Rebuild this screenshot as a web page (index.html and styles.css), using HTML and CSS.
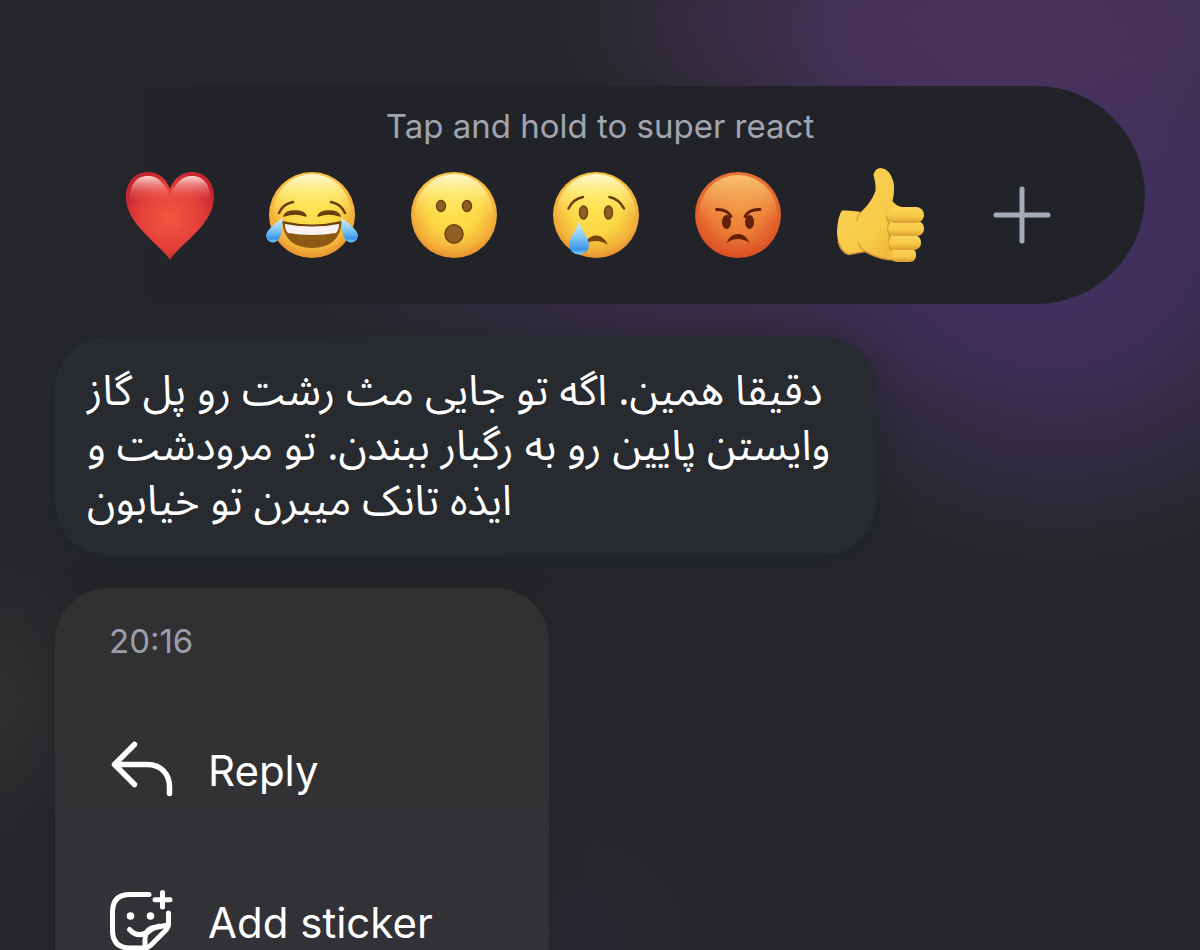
FILE: index.html
```html
<!DOCTYPE html>
<html lang="en">
<head>
  <meta charset="UTF-8">
  <meta name="viewport" content="width=device-width, initial-scale=1">
  <title>Message actions</title>
  <link rel="stylesheet" href="styles.css">
</head>
<body>
  <!-- shared gradients -->
  <svg class="defs" width="0" height="0" aria-hidden="true">
    <defs>
      <radialGradient id="face" cx="50%" cy="42%" r="60%">
        <stop offset="0" stop-color="#fde350"/>
        <stop offset="0.5" stop-color="#fbd644"/>
        <stop offset="0.8" stop-color="#f3b13a"/>
        <stop offset="1" stop-color="#e48a2c"/>
      </radialGradient>
      <radialGradient id="angry" cx="50%" cy="40%" r="62%">
        <stop offset="0" stop-color="#f0913f"/>
        <stop offset="0.5" stop-color="#ec7d37"/>
        <stop offset="1" stop-color="#da4a22"/>
      </radialGradient>
      <linearGradient id="shine" x1="0" y1="0" x2="0" y2="1">
        <stop offset="0" stop-color="#fffbdc" stop-opacity="0.95"/>
        <stop offset="0.25" stop-color="#fff590" stop-opacity="0.6"/>
        <stop offset="0.55" stop-color="#ffee60" stop-opacity="0"/>
      </linearGradient>
      <linearGradient id="shineAngry" x1="0" y1="0" x2="0" y2="1">
        <stop offset="0" stop-color="#fbca7c" stop-opacity="0.9"/>
        <stop offset="0.25" stop-color="#f8b864" stop-opacity="0.6"/>
        <stop offset="0.6" stop-color="#f5a050" stop-opacity="0"/>
      </linearGradient>
      <radialGradient id="heart" cx="50%" cy="52%" r="56%">
        <stop offset="0" stop-color="#f2573f"/>
        <stop offset="0.6" stop-color="#e5403a"/>
        <stop offset="1" stop-color="#c42530"/>
      </radialGradient>
      <linearGradient id="heartShine" x1="0" y1="0" x2="0" y2="1">
        <stop offset="0" stop-color="#ffe2de" stop-opacity="0.95"/>
        <stop offset="1" stop-color="#f0584a" stop-opacity="0"/>
      </linearGradient>
      <linearGradient id="tear" x1="0" y1="0" x2="0" y2="1">
        <stop offset="0" stop-color="#d6f3fd"/>
        <stop offset="0.5" stop-color="#7cc6f5"/>
        <stop offset="0.85" stop-color="#3a94ea"/>
        <stop offset="1" stop-color="#7fd0f8"/>
      </linearGradient>
      <linearGradient id="hand" x1="0" y1="0" x2="1" y2="1">
        <stop offset="0" stop-color="#f9d155"/>
        <stop offset="0.6" stop-color="#f8ca48"/>
        <stop offset="1" stop-color="#e9a835"/>
      </linearGradient>
      <linearGradient id="finger" x1="0" y1="0" x2="0" y2="1">
        <stop offset="0" stop-color="#fbd65c"/>
        <stop offset="0.6" stop-color="#f7c846"/>
        <stop offset="1" stop-color="#dc9c30"/>
      </linearGradient>
    </defs>
  </svg>

  <main class="overlay">
    <!-- reactions -->
    <section class="reactions">
      <p class="reactions-hint">Tap and hold to super react</p>
      <div class="reactions-row">
        <button class="reaction" type="button" aria-label="Love">
          <svg viewBox="0 0 100 100">
            <path d="M50 94.700C40 79 6 60 6 32C6 17 15 7 28 7C38 7 46 13 50 24C54 13 62 7 72 7C85 7 94 17 94 32C94 60 60 79 50 94.700Z" fill="url(#heart)"/>
            <path d="M10 36C9 19 17 11 28 11C38 11 44 18 50 30C56 18 62 11 72 11C83 11 91 19 90 36Z" fill="url(#heartShine)"/>
          </svg>
        </button>
        <button class="reaction" type="button" aria-label="Haha">
          <svg viewBox="0 0 100 100">
            <circle cx="50" cy="50" r="43" fill="url(#face)"/>
            <circle cx="50" cy="48" r="39" fill="url(#shine)"/>
            <g fill="none" stroke="#6b3d0e" stroke-width="2.500" stroke-linecap="round">
              <path d="M17 48Q21 39 31 37"/>
              <path d="M69 37Q79 39 83 48"/>
            </g>
            <path d="M22 51Q24 46 33 46Q42 46 44 51Q33 47 22 51ZM56 51Q58 46 67 46Q76 46 78 51Q67 47 56 51Z" fill="#6b3d0e" stroke="#6b3d0e" stroke-width="1.500" stroke-linejoin="round"/>
            <path d="M20 57Q50 64 80 57Q77 83 50 83Q23 83 20 57Z" fill="#8d5a16"/>
            <path d="M20 57Q50 64 80 57" fill="none" stroke="#6b3d0e" stroke-width="2"/>
            <path d="M23 59Q50 64 77 59Q77 65 74 68Q50 72 26 68Q23 65 23 59Z" fill="#f6f2ee"/>
            <path d="M20.500 53Q21 77 11 77.500Q4 77 4 70Q5 64 20.500 53Z" fill="url(#tear)"/>
            <path d="M79.500 53Q79 77 89 77.500Q96 77 96 70Q95 64 79.500 53Z" fill="url(#tear)"/>
          </svg>
        </button>
        <button class="reaction" type="button" aria-label="Wow">
          <svg viewBox="0 0 100 100">
            <circle cx="50" cy="50" r="43" fill="url(#face)"/>
            <circle cx="50" cy="48" r="39" fill="url(#shine)"/>
            <g fill="#8f5e20" stroke="#6e4212" stroke-width="1.500">
              <ellipse cx="37" cy="41" rx="4.500" ry="5.500"/>
              <ellipse cx="63" cy="41" rx="4.500" ry="5.500"/>
              <ellipse cx="50" cy="69" rx="9" ry="9.200"/>
            </g>
          </svg>
        </button>
        <button class="reaction" type="button" aria-label="Sad">
          <svg viewBox="0 0 100 100">
            <circle cx="50" cy="50" r="43" fill="url(#face)"/>
            <circle cx="50" cy="48" r="39" fill="url(#shine)"/>
            <g fill="none" stroke="#6b3d0e" stroke-width="2.500" stroke-linecap="round">
              <path d="M22.500 43.500Q27 34 37 32"/>
              <path d="M63.500 32Q73 34 78 43.500"/>
            </g>
            <g fill="#8f5e20" stroke="#6e4212" stroke-width="1.500">
              <ellipse cx="37.500" cy="47.500" rx="4" ry="6.500"/>
              <ellipse cx="62.500" cy="47.500" rx="4" ry="6.500"/>
            </g>
            <path d="M40 76Q45 70 51 70.500Q58 71 62 80Q52 73 40 78Z" fill="#744510"/>
            <path d="M33 56C35 65 43 73 43 80A10 9.500 0 0 1 23 80C23 73 31 65 33 56Z" fill="url(#tear)"/>
          </svg>
        </button>
        <button class="reaction" type="button" aria-label="Angry">
          <svg viewBox="0 0 100 100">
            <circle cx="50" cy="50" r="43" fill="url(#angry)"/>
            <circle cx="50" cy="49" r="39" fill="url(#shineAngry)"/>
            <g fill="none" stroke="#642008" stroke-width="3" stroke-linecap="round">
              <path d="M28.500 44.500Q39 44 43 51.500"/>
              <path d="M72 44.500Q61 44 57 51.500"/>
            </g>
            <g fill="#642008">
              <ellipse cx="38.500" cy="57" rx="4.500" ry="7"/>
              <ellipse cx="61.500" cy="57" rx="4.500" ry="7"/>
              <path d="M38.500 78Q42 69 50 69Q58 69 61.500 78Q50 70 38.500 78Z"/>
            </g>
          </svg>
        </button>
        <button class="reaction" type="button" aria-label="Like">
          <svg viewBox="0 0 100 100">
            <path d="M12 45.500Q22 45 31 47Q41 38 45.500 26Q46 18 43.500 10Q45 3 51 3Q60 4 63.500 17Q65 27 62.500 36Q66 41 72 42L84 70L72 95Q52 96 35 86.500Q27 88 19 89.500Q7 84 7 66Q8 50 12 45.500Z" fill="url(#hand)"/>
            <path d="M31 47Q27 51 27 56M35 86.500Q29 82 28 77" fill="none" stroke="#dfa336" stroke-width="1.500"/>
            <path d="M8 76Q11 88 19 89.500Q27 88 35 86.500Q50 95 64 95" fill="none" stroke="#d08f35" stroke-width="1.500"/>
            <path d="M61 44Q55 51 59 58Q57 66 60 71Q58 80 62 86" fill="none" stroke="#d69a32" stroke-width="2"/>
            <rect x="61" y="83" width="25" height="14" rx="6" fill="url(#finger)"/>
            <rect x="59" y="70" width="32" height="15" rx="7" fill="url(#finger)"/>
            <rect x="58" y="56" width="36" height="15" rx="7" fill="url(#finger)"/>
            <rect x="57" y="42" width="37" height="16" rx="8" fill="url(#finger)"/>
          </svg>
        </button>
        <button class="reaction" type="button" aria-label="More reactions">
          <svg viewBox="0 0 100 100">
            <path d="M50 24V76M24 50H76" fill="none" stroke="#a3abb8" stroke-width="5" stroke-linecap="round"/>
          </svg>
        </button>
      </div>
    </section>

    <!-- selected message -->
    <article class="message" lang="fa" dir="rtl">
      دقیقا همین. اگه تو جایی مث رشت رو پل گاز<br>
      وایستن پایین رو به رگبار ببندن. تو مرودشت و<br>
      ایذه تانک میبرن تو خیابون
    </article>

    <!-- context menu -->
    <nav class="menu">
      <time class="menu-time" datetime="20:16">20:16</time>
      <button class="menu-item" type="button">
        <svg viewBox="0 0 64 64" fill="none" stroke="currentColor" stroke-width="5.500" stroke-linecap="round" stroke-linejoin="round">
          <path d="M25.500 6.500L5.500 26.500L25.500 46.500M6 26.500H38C52 26.500 60.500 36 60.500 49V55.500"/>
        </svg>
        <span>Reply</span>
      </button>
      <button class="menu-item" type="button">
        <svg viewBox="0 0 64 64" fill="none" stroke="currentColor" stroke-width="5" stroke-linecap="round" stroke-linejoin="round">
          <path d="M40 4.500H21Q3.500 4.500 3.500 22V40Q3.500 58 21 58H37Q40 57 42 55L56 41Q59.500 37.500 59.500 34V23"/>
          <path d="M36 57V50Q36 37 49 37L59 35"/>
          <path d="M20.500 39.500Q30 50 43 39L50 36"/>
          <path d="M53.500 2.500V17M46 9.800H61"/>
          <circle cx="21.500" cy="26" r="3.800" fill="currentColor" stroke="none"/>
          <circle cx="41.500" cy="26" r="3.800" fill="currentColor" stroke="none"/>
        </svg>
        <span>Add sticker</span>
      </button>
    </nav>
  </main>
</body>
</html>
```
FILE: styles.css
```css
* { box-sizing: border-box; }
body {
  margin: 0; height: 100vh; overflow: hidden;
  font-family: Inter, 'Liberation Sans', sans-serif; color: #fff;
  background:
    radial-gradient(ellipse 440px 180px at 1000px 20px, #48325c 0%, rgba(72,50,92,0.85) 40%, rgba(72,50,92,0) 100%),
    radial-gradient(ellipse 340px 340px at 1060px 220px, #43315f 0%, rgba(65,48,96,0.9) 40%, rgba(60,46,90,0) 100%),
    radial-gradient(ellipse 440px 130px at 720px 290px, rgba(64,48,88,0.8), rgba(64,48,88,0) 100%),
    radial-gradient(ellipse 160px 130px at 0 700px, #303031, rgba(48,48,49,0) 100%),
    radial-gradient(ellipse 140px 100px at 550px 930px, #2a2935, rgba(42,41,53,0) 100%),
    #25272a;
}
button { border: none; background: none; padding: 0; color: inherit; font: inherit; cursor: pointer; }
svg { display: block; }
.defs { position: absolute; }

.overlay { display: flex; flex-direction: column; align-items: flex-start; gap: 33px; height: 100vh; overflow: hidden; padding: 86px 55px 0; }

/* reactions */
.reactions { width: 100%; flex-shrink: 0; padding: 20px 52px 39px 44px; background: linear-gradient(90deg, #25262a, #222328 20%); border-radius: 109px; }
.reactions-hint { margin: 0 -8px 0 0; font-size: 33px; line-height: 40px; text-align: center; color: #a0a5b0; }
.reactions-row { display: grid; grid-template-columns: repeat(7, 1fr); justify-items: center; padding-top: 19px; }
.reaction svg { width: 100px; height: 100px; }

/* message */
.message {
  flex-shrink: 0; padding: 27px 46px 26px 32px; background: #272a2e; border-radius: 52px;
  font-family: 'Noto Sans Arabic', 'DejaVu Sans', sans-serif; font-size: 42px; line-height: 55px;
  text-align: left; white-space: nowrap;
  box-shadow: 0 4px 32px rgba(30,31,34,0.5);
}

/* context menu */
.menu { width: 494px; flex-shrink: 0; padding-bottom: 54px; background: linear-gradient(#313132, #323135 60%, #333238); border-radius: 54px; box-shadow: 0 4px 32px rgba(30,31,34,0.4); }
.menu-time { display: block; padding: 0 54px; font-size: 33px; line-height: 106px; color: #9a9fab; }
.menu-item { display: flex; align-items: center; gap: 35px; width: 100%; height: 152px; padding: 0 54px; font-size: 42px; text-align: left; }
.menu-item svg { width: 64px; height: 64px; flex-shrink: 0; }
```
